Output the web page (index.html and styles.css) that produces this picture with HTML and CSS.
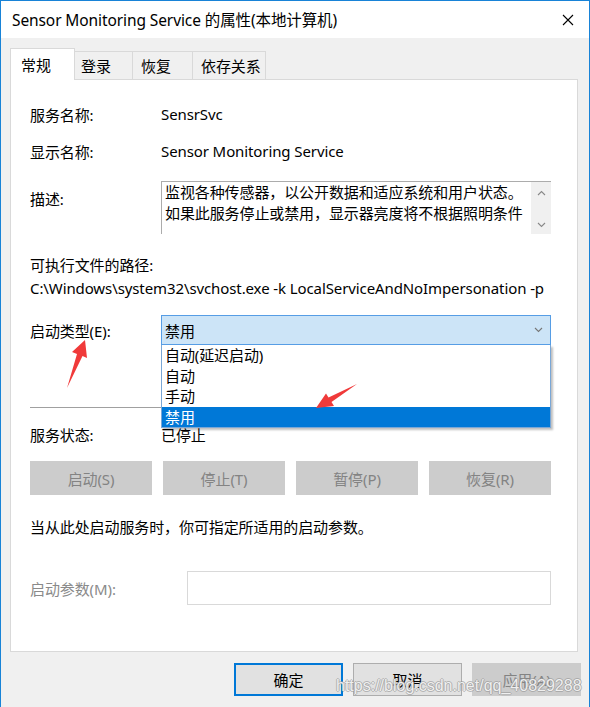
FILE: index.html
```html
<!DOCTYPE html>
<html lang="zh-CN">
<head>
    <meta charset="UTF-8">
    <title>Sensor Monitoring Service 的属性(本地计算机)</title>
    <link rel="stylesheet" href="styles.css">
</head>
<body>
    <div class="window">
        <div class="titlebar">
            <span class="title">Sensor Monitoring Service 的属性(本地计算机)</span>
            <svg class="close" width="12" height="12" viewBox="0 0 12 12">
                <path d="M1 1 L11 11 M11 1 L1 11" stroke="#000" stroke-width="1.1"/>
            </svg>
        </div>

        <div class="tabs">
            <div class="tab active">常规</div>
            <div class="tab tab-login">登录</div>
            <div class="tab tab-recover">恢复</div>
            <div class="tab tab-deps">依存关系</div>
        </div>

        <div class="panel">
            <div class="row row-name">
                <span class="label">服务名称:</span>
                <span>SensrSvc</span>
            </div>
            <div class="row row-display">
                <span class="label">显示名称:</span>
                <span>Sensor Monitoring Service</span>
            </div>
            <div class="row row-desc">
                <span class="label desc-label">描述:</span>
                <div class="desc-box">
                    <div class="desc-text">监视各种传感器，以公开数据和适应系统和用户状态。如果此服务停止或禁用，显示器亮度将不根据照明条件</div>
                    <div class="scrollbar">
                        <svg width="9" height="6" viewBox="0 0 9 6"><path d="M1 5 L4.5 1.5 L8 5" fill="none" stroke="#888" stroke-width="1.1"/></svg>
                        <svg width="9" height="6" viewBox="0 0 9 6"><path d="M1 1 L4.5 4.5 L8 1" fill="none" stroke="#888" stroke-width="1.1"/></svg>
                    </div>
                </div>
            </div>
            <div class="row row-path-label">可执行文件的路径:</div>
            <div class="row row-path">C:\Windows\system32\svchost.exe -k LocalServiceAndNoImpersonation -p</div>

            <div class="row row-start">
                <span class="label">启动类型(E):</span>
                <div class="combo">
                    <span>禁用</span>
                    <svg width="9" height="6" viewBox="0 0 9 6"><path d="M1 1 L4.5 4.5 L8 1" fill="none" stroke="#777" stroke-width="1.1"/></svg>
                    <ul class="dropdown">
                        <li>自动(延迟启动)</li>
                        <li>自动</li>
                        <li>手动</li>
                        <li class="selected">禁用</li>
                    </ul>
                </div>
            </div>

            <div class="separator"></div>

            <div class="row row-status">
                <span class="label">服务状态:</span>
                <span>已停止</span>
            </div>

            <div class="service-buttons">
                <button class="btn-disabled">启动(S)</button>
                <button class="btn-disabled">停止(T)</button>
                <button class="btn-disabled">暂停(P)</button>
                <button class="btn-disabled">恢复(R)</button>
            </div>

            <div class="row row-hint">当从此处启动服务时，你可指定所适用的启动参数。</div>

            <div class="row row-param">
                <span class="label param-label">启动参数(M):</span>
                <div class="param-input"></div>
            </div>
        </div>

        <div class="footer">
            <button class="btn btn-default">确定</button>
            <button class="btn">取消</button>
            <button class="btn btn-off">应用(A)</button>
        </div>

        <svg class="arrows" width="590" height="707" viewBox="0 0 590 707">
            <polygon points="85,340 87,358 82.5,356 67,388 77,354 72,352" fill="#f03a3a"/>
            <polygon points="316,408 334,406 331.5,402 357,384 328.5,397.5 326,393.5" fill="#f03a3a"/>
        </svg>

        <div class="watermark">https://blog.csdn.net/qq_40829288</div>
    </div>
</body>
</html>
```

FILE: styles.css
```css
* {
    box-sizing: border-box;
}
body {
    margin: 0;
    font-family: "Noto Sans", "Noto Sans CJK SC", sans-serif;
    font-size: 15px;
    letter-spacing: -0.1px;
    color: #000;
}
.window {
    position: relative;
    width: 590px;
    height: 707px;
    background: #f0f0f0;
    border: 1px solid #1883d7;
    border-bottom: none;
    overflow: hidden;
}
.titlebar {
    height: 37px;
    background: #fff;
    display: flex;
    align-items: center;
    justify-content: space-between;
    padding: 0 15px 0 11px;
}
.title {
    font-size: 15.5px;
}
.tabs {
    display: flex;
    align-items: flex-end;
    height: 41px;
    padding-left: 9px;
}
.tab {
    height: 28px;
    padding-left: 6px;
    border: 1px solid #d9d9d9;
    border-bottom: none;
    margin-left: -1px;
    display: flex;
    align-items: center;
    background: #f0f0f0;
}
.tab.active {
    width: 65px;
    height: 32px;
    margin-left: 0;
    margin-bottom: -1px;
    padding-left: 10px;
    background: #fff;
    position: relative;
    z-index: 1;
}
.tab-login {
    width: 59px;
}
.tab-recover {
    width: 61px;
    padding-left: 8px;
}
.tab-deps {
    width: 74px;
    padding-left: 8px;
}
.panel {
    position: relative;
    margin: 0 11px 0 9px;
    height: 573px;
    background: #fff;
    border: 1px solid #d9d9d9;
    padding: 0 26px 0 19px;
}
.row {
    display: flex;
    align-items: center;
    height: 20px;
}
.label {
    width: 131px;
    flex-shrink: 0;
}
.row-name {
    margin-top: 24px;
}
.row-display {
    margin-top: 17px;
}
.row-desc {
    margin-top: 20px;
    height: 53px;
    align-items: flex-start;
}
.desc-label {
    margin-top: 8px;
    line-height: 20px;
}
.desc-box {
    flex: 1;
    height: 53px;
    border: 1px solid #acacac;
    border-right: none;
    border-bottom: none;
    display: flex;
}
.desc-text {
    flex: 1;
    padding: 0 0 0 3px;
    line-height: 21px;
    overflow: hidden;
}
.scrollbar {
    width: 20px;
    background: #f0f0f0;
    display: flex;
    flex-direction: column;
    align-items: center;
    justify-content: space-between;
    padding: 8px 0 6px;
}
.row-path-label {
    margin-top: 20px;
}
.row-path {
    margin-top: 4px;
    white-space: nowrap;
}
.row-start {
    margin-top: 17px;
    height: 30px;
}
.combo {
    position: relative;
    flex: 1;
    height: 30px;
    background: #cce4f7;
    border: 1px solid #569de5;
    display: flex;
    align-items: center;
    justify-content: space-between;
    padding: 0 7px 0 3px;
}
.dropdown {
    position: absolute;
    top: 29px;
    left: -1px;
    right: -1px;
    margin: 0;
    padding: 0;
    list-style: none;
    background: #fff;
    border: 1px solid #7aa7d6;
    border-top: none;
    box-shadow: 2px 2px 2px rgba(0, 0, 0, 0.25);
    z-index: 2;
}
.dropdown li {
    height: 20.5px;
    line-height: 20.5px;
    padding-left: 3px;
}
.dropdown li.selected {
    background: #0078d7;
    color: #fff;
}
.separator {
    margin-top: 62px;
    height: 1px;
    background: #a0a0a0;
}
.row-status {
    margin-top: 16px;
}
.service-buttons {
    display: flex;
    justify-content: space-between;
    margin-top: 17px;
}
.btn-disabled {
    width: 122px;
    height: 34px;
    border: none;
    background: #cccccc;
    color: #838383;
    font-family: inherit;
    font-size: 15px;
    letter-spacing: inherit;
}
.row-hint {
    margin-top: 21px;
}
.row-param {
    margin-top: 35px;
    height: 34px;
}
.param-label {
    width: 157px;
    color: #8a8a8a;
}
.param-input {
    flex: 1;
    height: 34px;
    border: 1px solid #d9d9d9;
}
.footer {
    display: flex;
    justify-content: flex-end;
    gap: 10px;
    margin-top: 11px;
    padding-right: 8px;
}
.btn {
    width: 109px;
    height: 33px;
    background: #e1e1e1;
    border: 1px solid #adadad;
    font-family: inherit;
    font-size: 15px;
    letter-spacing: inherit;
    color: #000;
}
.btn-default {
    border: 2px solid #0078d7;
}
.btn-off {
    background: #cccccc;
    border-color: #cccccc;
    color: #838383;
}
.arrows {
    position: absolute;
    left: -1px;
    top: -1px;
    pointer-events: none;
    z-index: 5;
}
.watermark {
    position: absolute;
    left: 335px;
    top: 676px;
    font-family: "Liberation Sans", sans-serif;
    font-size: 16px;
    letter-spacing: 0;
    color: rgba(255, 255, 255, 0.85);
    text-shadow: 1px 0 0 rgba(150, 150, 150, 0.6), -1px 0 0 rgba(150, 150, 150, 0.6), 0 1px 0 rgba(150, 150, 150, 0.6), 0 -1px 0 rgba(150, 150, 150, 0.6);
    z-index: 6;
}
```
